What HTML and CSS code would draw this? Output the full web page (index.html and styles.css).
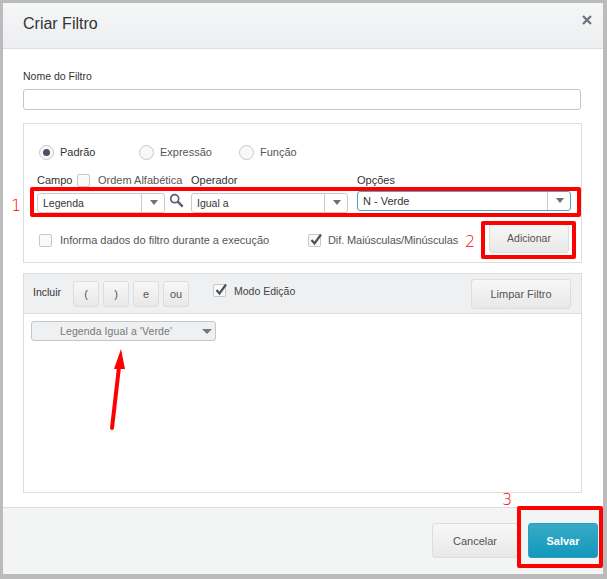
FILE: index.html
```html
<!DOCTYPE html>
<html lang="pt">
<head>
<meta charset="utf-8">
<title>Criar Filtro</title>
<link rel="stylesheet" href="styles.css">
</head>
<body>
<div class="modal">
  <header class="head">
    <h1>Criar Filtro</h1>
    <svg class="close" width="10" height="10" viewBox="0 0 10 10"><path d="M1 1l8 8M9 1l-8 8" stroke="#6b7280" stroke-width="2.2"/></svg>
  </header>
  <main class="content">
    <label class="name-label">Nome do Filtro</label>
    <div class="input name-input"></div>
    <section class="panel">
      <div class="radios">
        <span class="radio-item r1"><span class="radio on"></span>Padrão</span>
        <span class="radio-item r2"><span class="radio"></span>Expressão</span>
        <span class="radio-item r3"><span class="radio"></span>Função</span>
      </div>
      <div class="labels">
        <span class="l-campo">Campo</span><span class="check small"></span><span class="l-ordem">Ordem Alfabética</span>
        <span class="l-oper">Operador</span>
        <span class="l-opc">Opções</span>
      </div>
      <div class="selects">
        <div class="select s1"><span>Legenda</span><i class="sel-arrow"></i></div>
        <svg class="search" width="15" height="15" viewBox="0 0 15 15"><circle cx="5.7" cy="5.7" r="4" fill="none" stroke="#59606e" stroke-width="1.7"/><path d="M8.7 8.7l5 5" stroke="#59606e" stroke-width="2.4"/></svg>
        <div class="select s2"><span>Igual a</span><i class="sel-arrow"></i></div>
        <div class="select s3"><span>N - Verde</span><i class="sel-arrow"></i></div>
      </div>
      <div class="opts">
        <span class="check first-check"></span><span class="o1">Informa dados do filtro durante a execução</span>
        <span class="check checked"><svg width="14" height="14" viewBox="0 0 14 14"><path d="M2.5 7l3 3.5L12 1.5" fill="none" stroke="#4a5160" stroke-width="2.2"/></svg></span><span class="o2">Dif. Maiúsculas/Minúsculas</span>
        <button class="btn add">Adicionar</button>
      </div>
    </section>
    <section class="query">
      <div class="toolbar">
        <span class="incl">Incluir</span>
        <button class="btn mini">(</button><button class="btn mini">)</button><button class="btn mini">e</button><button class="btn mini">ou</button>
        <span class="check checked edit-check"><svg width="14" height="14" viewBox="0 0 14 14"><path d="M2.5 7l3 3.5L12 1.5" fill="none" stroke="#4a5160" stroke-width="2.2"/></svg></span><span class="edit-label">Modo Edição</span>
        <button class="btn clear">Limpar Filtro</button>
      </div>
      <div class="query-body">
        <div class="token"><span>Legenda Igual a 'Verde'</span><i class="tok-arrow"></i></div>
      </div>
    </section>
  </main>
  <footer class="foot">
    <button class="btn cancel">Cancelar</button>
    <button class="save">Salvar</button>
  </footer>
</div>
<div class="mark m1"></div>
<div class="mark m2"></div>
<div class="mark m3"></div>
<span class="num n1">1</span>
<span class="num n2">2</span>
<span class="num n3">3</span>
<svg class="arrow" width="30" height="90" viewBox="0 0 30 90"><path d="M6 81L13 20" stroke="#f00" stroke-width="4" stroke-linecap="round"/><path d="M15 2L8 22 19 22Z" fill="#f00"/></svg>
</body>
</html>
```
FILE: styles.css
```css
* { box-sizing: border-box; }
html, body { margin: 0; height: 100%; }
body {
  width: 607px; height: 579px; background: #bbb; position: relative; overflow: hidden;
  padding: 3px 4px 5px 3px;
  font-family: "Liberation Sans", Arial, sans-serif; font-size: 11px; color: #333;
}
.modal { height: 571px; background: #fff; display: flex; flex-direction: column; }
.head {
  height: 46px; flex: none; display: flex; align-items: center; justify-content: space-between;
  padding: 0 11px 4px 20px; background: linear-gradient(#f5f6f6, #edeef0); border-bottom: 1px solid #ddd;
}
h1 { margin: 0; font-size: 16px; font-weight: 400; color: #333; }
.close { display: block; margin-top: -7px; }
.content { flex: 1; padding: 21px 21px 0 20px; display: flex; flex-direction: column; min-height: 0; }
.name-label { font-size: 10.5px; line-height: 13px; color: #333; height: 13px; }
.input { border: 1px solid #c5c5c5; border-radius: 3px; background: #fff; }
.name-input { height: 21px; margin: 6px 1px 0 0; flex: none; }
.panel { height: 140px; flex: none; margin-top: 13px; border: 1px solid #ddd; padding: 0 13px; }
.radios { height: 16px; margin-top: 20px; display: flex; }
.radio-item { display: flex; align-items: center; gap: 6px; line-height: 16px; color: #555; }
.r1 { width: 100px; margin-left: 2px; color: #333; }
.r2 { width: 100px; }
.radio {
  width: 15px; height: 15px; border-radius: 50%; border: 1px solid #c8c8c8; background: #f8f8f8; flex: none; position: relative;
}
.radio.on::after {
  content: ""; position: absolute; inset: 3px; border-radius: 50%; background: #4a5160;
}
.labels { display: flex; align-items: center; height: 14px; margin-top: 13px; color: #333; white-space: nowrap; }
.l-campo { width: 40px; }
.check {
  width: 13px; height: 13px; flex: none; border: 1px solid #c8c8c8; border-radius: 2px; background: #fafafa; display: inline-block; position: relative;
}
.check svg { position: absolute; left: 0; top: -2px; }
.l-ordem { margin-left: 8px; width: 93px; color: #555; }
.l-oper { width: 166px; color: #333; }
.l-opc { color: #333; }
.selects { display: flex; align-items: flex-start; height: 20px; margin-top: 6px; }
.select {
  height: 20px; border: 1px solid #ccc; border-radius: 3px; background: #fff; display: flex; align-items: center;
  padding-left: 5px; color: #333; position: relative; flex: none; font-size: 10.5px;
}
.select span { flex: 1; }
.sel-arrow {
  width: 23px; height: 100%; border-left: 1px solid #ccc; position: relative; flex: none;
}
.sel-arrow::after {
  content: ""; position: absolute; left: 8px; top: 6px;
  border-left: 4px solid transparent; border-right: 4px solid transparent; border-top: 5px solid #6b7280;
}
.s1 { width: 128px; }
.search { margin: 0 7px 0 4px; flex: none; }
.s2 { width: 157px; }
.s3 { width: 214px; margin: -2px 0 0 9px; border-color: #4aa6c6; font-size: 11px; }
.opts { display: flex; align-items: center; height: 34px; margin-top: 10px; color: #555; white-space: nowrap; }
.first-check { margin-left: 2px; }
.o1 { margin-left: 8px; width: 248px; }
.o2 { margin-left: 7px; letter-spacing: -.1px; }
.btn {
  font: inherit; color: #555; border: 1px solid #ddd; border-radius: 3px; background: linear-gradient(#f8f8f8, #e8e8e8); padding: 0;
}
.add { width: 80px; height: 29px; margin: -4px -1px 0 auto; font-size: 10.5px; flex: none; }
.query { height: 220px; flex: none; margin-top: 10px; border: 1px solid #ddd; display: flex; flex-direction: column; }
.toolbar { height: 40px; flex: none; background: #eff0f1; border-bottom: 1px solid #ddd; display: flex; align-items: center; padding-left: 9px; color: #333; white-space: nowrap; }
.incl { width: 40px; font-size: 10.5px; margin-top: -4px; }
.mini { width: 26px; height: 26px; margin-right: 4px; font-size: 11px; flex: none; }
.edit-check { margin-left: 20px; margin-top: -6px; }
.edit-label { margin-left: 8px; margin-top: -6px; color: #444; font-size: 10.5px; }
.clear { width: 100px; height: 30px; margin-left: auto; margin-right: 10px; }
.query-body { flex: 1; padding: 7px 7px; }
.token {
  width: 185px; height: 20px; border: 1px solid #c5c5c5; border-radius: 3px; background: #eff0f1; color: #777;
  display: flex; align-items: center; position: relative; font-size: 10.5px; letter-spacing: .1px;
}
.token span { margin-left: 28px; }
.tok-arrow {
  position: absolute; right: 3px; top: 7px; border-left: 5px solid transparent; border-right: 5px solid transparent; border-top: 5px solid #777;
}
.foot {
  flex: none; height: 67px; background: #f3f4f4; border-top: 1px solid #ddd; display: flex; align-items: flex-start; justify-content: flex-end;
  padding: 15px 5px 0 0; gap: 10px;
}
.cancel { width: 86px; height: 35px; font-size: 11px; }
.save {
  font: bold 11px "Liberation Sans", Arial, sans-serif; width: 70px; height: 35px; border: 1px solid #2a9fbf; border-radius: 3px; color: #fff;
  background: linear-gradient(#38aac8, #1398bc); padding: 0;
}
.mark { position: absolute; border: 4px solid #f00; border-radius: 2px; }
.m1 { left: 30px; top: 187px; width: 551px; height: 30px; }
.m2 { left: 481px; top: 221px; width: 95px; height: 38px; }
.m3 { left: 517px; top: 506px; width: 86px; height: 62px; }
.num { position: absolute; color: #f00; font-size: 16px; line-height: 18px; font-family: "DejaVu Sans", sans-serif; font-weight: 300; }
.n1 { left: 11px; top: 197px; }
.n2 { left: 465px; top: 233px; }
.n3 { left: 502px; top: 491px; }
.arrow { position: absolute; left: 106px; top: 347px; }
```
